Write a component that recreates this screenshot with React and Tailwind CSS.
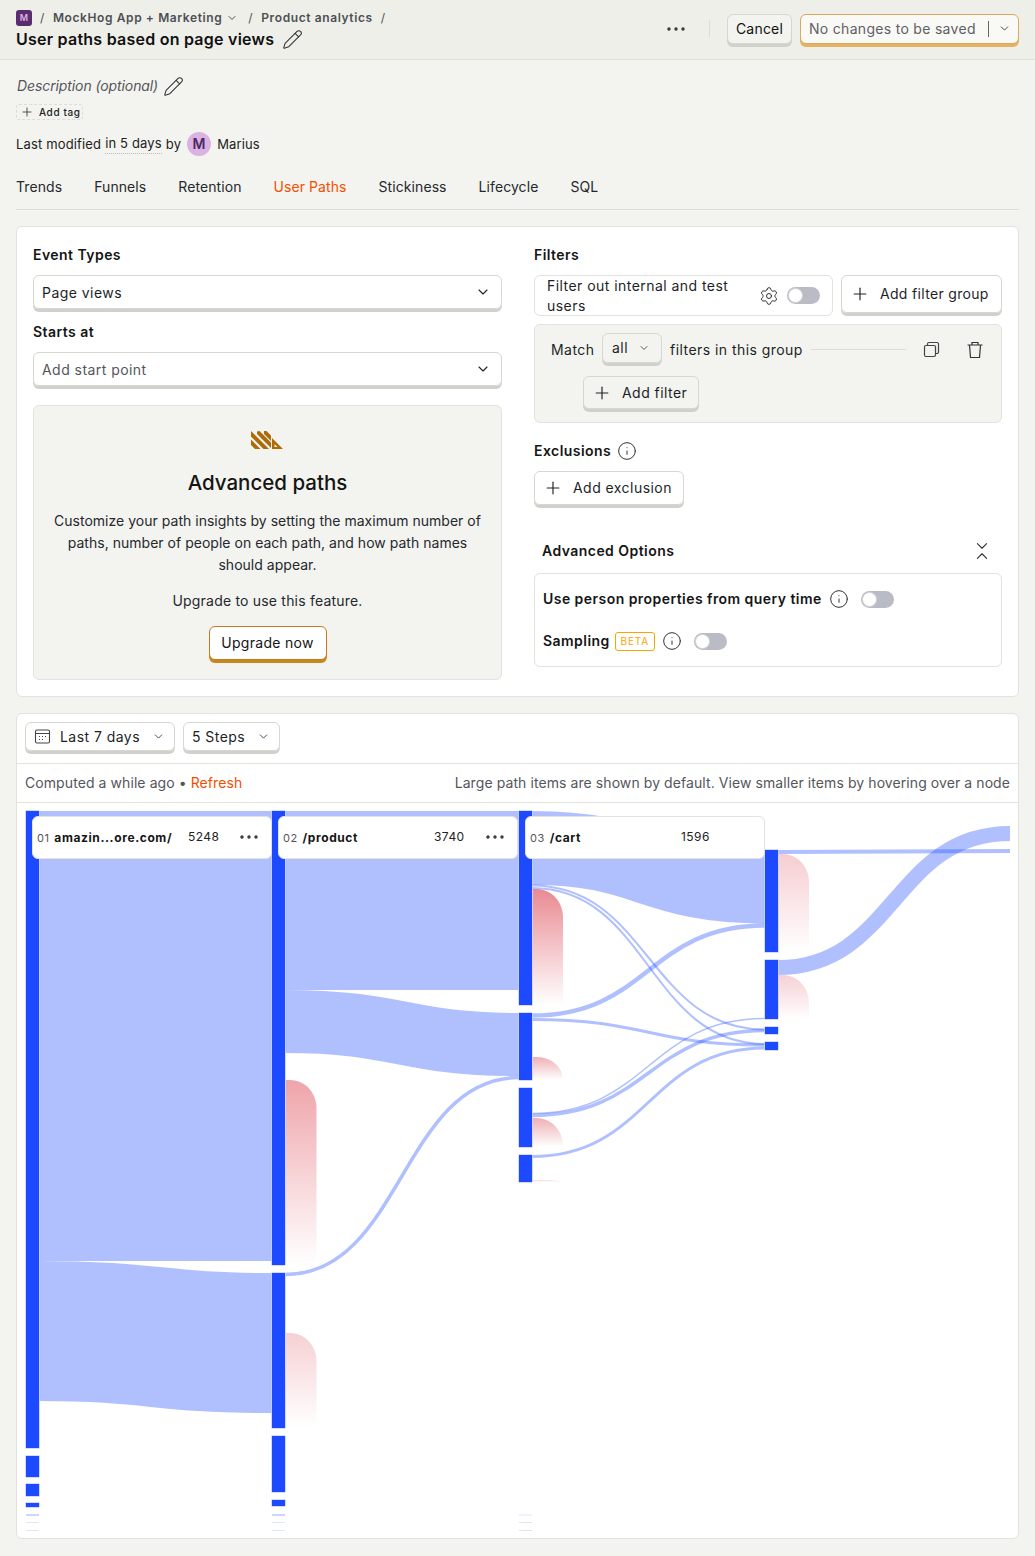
import { ChevronDown, ChevronsDownUp, Ellipsis, Info, Pencil, Plus, Settings } from "lucide-react";

const BLUE = "#1d4aff";

// x0, x1, y at source, y at target, band width
const links = [
  [39, 272, 1036, 1036, 450],
  [39, 272, 1331, 1343, 140],
  [285, 519, 900.5, 900.5, 179],
  [285, 519, 1021.5, 1044.5, 63],
  [285, 519, 1274.5, 1077.5, 3.5],
  [532, 765, 848, 886.5, 74],
  [532, 765, 885.5, 1029.5, 2],
  [532, 765, 888, 1044, 2],
  [532, 765, 1015.5, 925.5, 4.5],
  [532, 765, 1019.5, 1045, 3],
  [532, 765, 1113.5, 1018.5, 1.5],
  [532, 765, 1115.5, 1030.5, 3.5],
  [532, 765, 1156.5, 1048, 3],
  [778, 1010, 852, 851, 4],
  [778, 1010, 967.5, 833.5, 15],
];

const nodes = [
  [26, 811, 1448], [26, 1456, 1477], [26, 1484, 1496], [26, 1503, 1507],
  [272, 811, 1265], [272, 1273, 1428], [272, 1436, 1492], [272, 1500, 1506],
  [519, 811, 1005], [519, 1013, 1080], [519, 1088, 1147], [519, 1155, 1182],
  [765, 850, 952], [765, 960, 1019], [765, 1027, 1034], [765, 1042, 1050],
];

const faint = [
  [26, 1514.5, 0.45], [26, 1522, 0.14], [26, 1530, 0.14],
  [272, 1514.5, 0.45], [272, 1522, 0.14], [272, 1530, 0.14],
  [519, 1514.5, 0.14], [519, 1522, 0.14], [519, 1530, 0.14],
];

const dropoffs = [
  [286, 1080, 1265, "#eea4aa"],
  [286, 1333, 1428, "#f6d0d4"],
  [532.5, 889, 1005, "#e98a92"],
  [532.5, 1057, 1080, "#eeb0b5"],
  [532.5, 1118, 1147, "#eeb0b5"],
  [532.5, 1180, 1182, "#f9d5d8"],
  [778.5, 854, 952, "#f6cdd1"],
  [778.5, 975, 1019, "#f6d0d4"],
];

function linkPath([x0, x1, y0, y1]) {
  const m = (x0 + x1) / 2;
  return `M${x0} ${y0}C${m} ${y0} ${m} ${y1} ${x1} ${y1}`;
}

function dropPath([x, top, bottom]) {
  const r = Math.min(bottom - top, 28);
  return `M${x} ${top}H${x + 4}C${x + 20} ${top} ${x + 30.5} ${top + r * 0.5} ${x + 30.5} ${top + r}V${bottom}H${x}Z`;
}

function Raised({ className = "", children }) {
  return (
    <div className={`flex items-center rounded-md border border-[#d6d7d0] shadow-[0_3px_0_#d0d1cb] ${className}`}>
      {children}
    </div>
  );
}

function Toggle() {
  return (
    <div className="h-[17px] w-[33px] shrink-0 rounded-full bg-[#b9bcc4] p-px">
      <div className="h-[15px] w-[15px] rounded-full border border-[#d2d3d6] bg-white" />
    </div>
  );
}

function AddButton({ label, className = "" }) {
  return (
    <Raised className={`whitespace-nowrap pl-2 ${className}`}>
      <Plus size={20} strokeWidth={1.4} className="mr-[10px] shrink-0 text-[#222]" />
      <span>{label}</span>
    </Raised>
  );
}

function InfoIcon({ className = "" }) {
  return <Info size={20} strokeWidth={1.2} className={`shrink-0 text-[#333] ${className}`} />;
}

function NodeCard({ step, name, count, dots = true, left }) {
  return (
    <div className={`absolute top-[13px] flex h-[43px] w-[240px] items-center rounded-md border border-[#e2e3dd] bg-white pl-1 ${left}`}>
      <div className="mt-px flex w-[151px] items-baseline gap-[5px]">
        <span className="text-[11px] text-[#555]">{step}</span>
        <span className="text-xs font-bold tracking-[0.6px] text-[#151515]">{name}</span>
      </div>
      <span className="-mt-[2px] text-xs text-[#222]">{count}</span>
      {dots && <Ellipsis size={24} strokeWidth={1.4} className="absolute right-[10px] top-[8px] text-[#333]" />}
    </div>
  );
}

function PathsChart() {
  return (
    <div className="relative h-[735px]">
      <svg width="1001" height="735" viewBox="17 803 1001 735" className="block">
        <defs>
          {dropoffs.map((d, i) => (
            <linearGradient key={i} id={`drop-${i}`} x1="0" y1="0" x2="0" y2="1">
              <stop offset="0" stopColor={d[3]} />
              <stop offset="1" stopColor={d[3]} stopOpacity="0" />
            </linearGradient>
          ))}
        </defs>
        {dropoffs.map((d, i) => (
          <path key={i} d={dropPath(d)} fill={`url(#drop-${i})`} />
        ))}
        {links.map((l, i) => (
          <path key={i} d={linkPath(l)} fill="none" stroke={BLUE} strokeOpacity="0.35" strokeWidth={l[4]} />
        ))}
        {nodes.map(([x, a, b], i) => (
          <rect key={i} x={x - 0.5} y={a - 0.5} width="14" height={b - a + 1} fill={BLUE} stroke="#fff" strokeOpacity="0.6" />
        ))}
        {faint.map(([x, y, o], i) => (
          <rect key={i} x={x} y={y} width="13" height="1" fill={BLUE} fillOpacity={o} />
        ))}
      </svg>
      <NodeCard step="01" name="amazin...ore.com/" count="5248" left="left-[15px]" />
      <NodeCard step="02" name="/product" count="3740" left="left-[261px]" />
      <NodeCard step="03" name="/cart" count="1596" dots={false} left="left-[508px]" />
    </div>
  );
}

export default function App() {
  return (
    <div className="min-h-screen bg-[#f3f4ef] font-['Inter',sans-serif] text-sm tracking-[0.45px] text-[#1d1f27]">
      <header className="flex h-[60px] items-center justify-between border-b border-[#dfe0da] bg-[#eeefe9] pl-4 pr-4">
        <div>
          <div className="mt-px flex h-4 items-center text-xs font-semibold tracking-[0.6px] text-[#4d4f54]">
            <div className="flex h-4 w-4 items-center justify-center rounded-[3px] bg-[#5a2d6e] text-[9px] font-semibold tracking-normal text-[#dcb1e3]">M</div>
            <span className="mx-[8px] font-normal">/</span>
            <span>MockHog App + Marketing</span>
            <ChevronDown size={12} className="ml-[4px]" />
            <span className="ml-[10px] mr-[8px] font-normal">/</span>
            <span>Product analytics</span>
            <span className="ml-[8px] font-normal">/</span>
          </div>
          <div className="mt-[2px] flex h-[22px] items-center text-base font-semibold tracking-[0.24px] text-[#111]">
            User paths based on page views
            <Pencil size={21} strokeWidth={1.2} className="ml-[8px] text-[#333]" />
          </div>
        </div>
        <div className="-mt-[2px] flex items-center">
          <Ellipsis size={24} strokeWidth={1.4} className="mr-[21px] text-[#333]" />
          <div className="mr-[17px] h-[17px] w-px bg-[#dcddd7]" />
          <div className="mr-[8px] flex h-[30px] w-[65px] items-center justify-center rounded-md border border-[#d6d7d0] bg-[#f3f4ef] tracking-[0.2px] text-[#111] shadow-[0_3px_0_#d0d1cb]">Cancel</div>
          <div className="flex h-[30px] w-[219px] items-center rounded-md border border-[#d8a95f] bg-[#f9f9f6] pl-2 tracking-[0.3px] text-[#5f6065] shadow-[0_3px_0_#e5b263]">
            <span>No changes to be saved</span>
            <div className="ml-[12px] h-[16px] w-px bg-[#666]" />
            <ChevronDown size={13} strokeWidth={1.6} className="ml-[9px] text-[#333]" />
          </div>
        </div>
      </header>

      <div className="px-4">
        <div className="mt-[17px] flex h-[18px] items-center pl-px italic tracking-[-0.1px] text-[#55565b]">
          Description (optional)
          <Pencil size={21} strokeWidth={1.2} className="ml-[5px] text-[#333]" />
        </div>
        <div className="mt-[9px] flex h-4 w-[67px] items-center rounded-[3px] border border-dashed border-[#dcddd7] pl-[3px] text-[10px] font-medium tracking-[0.6px] text-[#222]">
          <Plus size={14} strokeWidth={1.3} className="mr-[5px]" />
          Add tag
        </div>
        <div className="mt-[12px] flex h-6 items-center text-[13px] tracking-[0.15px] text-[#222]">
          Last modified
          <span className="ml-[4px] border-b border-dotted border-[#bbb]">in 5 days</span>
          <span className="ml-[4px]">by</span>
          <div className="ml-[6px] flex h-6 w-6 items-center justify-center rounded-full bg-[#dcb1e3] text-sm font-semibold text-[#4a2a63]">M</div>
          <span className="ml-[6px]">Marius</span>
        </div>
        <nav className="mt-[19px] flex h-[35px] items-start gap-8 border-b border-[#dcddd7] pt-[2px] tracking-[0.08px] text-[#26282e]">
          <span>Trends</span>
          <span>Funnels</span>
          <span>Retention</span>
          <span className="text-[#f54e00]">User Paths</span>
          <span>Stickiness</span>
          <span>Lifecycle</span>
          <span>SQL</span>
        </nav>

        <section className="mt-4 flex h-[471px] gap-8 rounded-md border border-[#e2e3dd] bg-white px-4 pt-[19px]">
          <div className="w-[469px]">
            <h3 className="h-[18px] font-semibold leading-[18px] text-[#151515]">Event Types</h3>
            <Raised className="mt-[11px] h-[34px] justify-between pl-2 pr-[10px]">
              <span className="mt-px">Page views</span>
              <ChevronDown size={16} strokeWidth={1.6} className="text-[#222]" />
            </Raised>
            <h3 className="mt-[14px] h-[18px] font-semibold leading-[18px] text-[#151515]">Starts at</h3>
            <Raised className="mt-[11px] h-[34px] justify-between pl-2 pr-[10px] text-[#55565b]">
              <span className="mt-px">Add start point</span>
              <ChevronDown size={16} strokeWidth={1.6} className="text-[#222]" />
            </Raised>
            <div className="mt-[19px] flex h-[275px] flex-col items-center rounded-md border border-[#e2e3dd] bg-[#f3f4ef] pt-[25px] text-center tracking-[0.02px]">
              <svg width="33" height="19" viewBox="252 431 33 19" className="block" fill="#ad6a08">
                <polygon points="252,431 270,449 264.5,449 252,436.5" />
                <polygon points="252,439.5 261.5,449 256,449 252,445" />
                <polygon points="258,431.5 260.5,431 272,442.5 272,448 258,434" />
                <polygon points="265,431 267.5,431 272,435.5 272,441 265,434" />
                <path d="M273 438L284 449H273ZM275.5 444V447H278.5Z" fillRule="evenodd" />
              </svg>
              <h2 className="mt-[19px] text-[20.5px] font-[450] leading-[28px] tracking-normal text-[#151515]">Advanced paths</h2>
              <p className="mt-[13px] w-[440px] leading-[22px] text-[#26282e]">
                Customize your path insights by setting the maximum number of paths, number of people on each path, and how path names should appear.
              </p>
              <p className="mt-[14px] leading-[22px] tracking-[0.2px] text-[#26282e]">Upgrade to use this feature.</p>
              <div className="mt-[14px] flex h-[34px] w-[118px] items-center justify-center rounded-md border border-[#c17d1c] bg-white tracking-[0.3px] text-[#151515] shadow-[0_3px_0_#c9851f]">
                Upgrade now
              </div>
            </div>
          </div>

          <div className="w-[468px]">
            <h3 className="h-[18px] font-semibold leading-[18px] text-[#151515]">Filters</h3>
            <div className="mt-[11px] flex gap-2">
              <div className="flex h-[41px] w-[299px] items-center rounded-md border border-[#e2e3dd] pl-3 pr-3">
                <span className="w-[205px] leading-[20px]">Filter out internal and test users</span>
                <Settings size={20} strokeWidth={1.2} className="ml-auto mr-[8px] text-[#333]" />
                <Toggle />
              </div>
              <AddButton label="Add filter group" className="h-[38px] w-[161px] tracking-[0.32px]" />
            </div>
            <div className="mt-[8px] h-[99px] rounded-md border border-[#e2e3dd] bg-[#f3f4ef] pl-4 pt-2">
              <div className="flex h-[30px] items-center">
                <span className="mt-[3px] w-[44px]">Match</span>
                <Raised className="ml-[7px] h-[30px] w-[60px] justify-between pl-[9px] pr-[11px]">
                  <span>all</span>
                  <ChevronDown size={12} strokeWidth={1.6} className="text-[#333]" />
                </Raised>
                <span className="ml-2 mt-[3px] whitespace-nowrap">filters in this group</span>
                <div className="ml-2 mt-[3px] h-px w-[95px] bg-[#dcddd7]" />
                <svg width="17" height="17" viewBox="0 0 17 17" fill="none" stroke="#444" strokeWidth="1.2" className="ml-[17px] mt-[3px]">
                  <rect x="1.5" y="4.5" width="11" height="11" rx="1.5" />
                  <path d="M4.5 4.5V3a1.5 1.5 0 0 1 1.5-1.5h8A1.5 1.5 0 0 1 15.5 3v8a1.5 1.5 0 0 1-1.5 1.5h-1.5" />
                </svg>
                <svg width="18" height="18" viewBox="0 0 18 18" fill="none" stroke="#333" strokeWidth="1.2" className="ml-[26px] mt-[3px]">
                  <path d="M1.5 4H16.5M6 4V1.5H12V4M3.5 4L4.5 16.5H13.5L14.5 4" />
                </svg>
              </div>
              <AddButton label="Add filter" className="ml-[32px] mt-[13px] h-[33px] w-[116px] bg-[#f3f4ef]" />
            </div>
            <div className="mt-[19px] flex h-[18px] items-center font-semibold text-[#151515]">
              Exclusions
              <InfoIcon className="ml-[6px]" />
            </div>
            <AddButton label="Add exclusion" className="mt-[11px] h-[34px] w-[150px]" />
            <div className="mt-[37px] flex h-[18px] items-center justify-between pl-2 pr-[9px] font-semibold text-[#151515]">
              <span>Advanced Options</span>
              <ChevronsDownUp size={22} strokeWidth={1.2} className="text-[#333]" />
            </div>
            <div className="mt-[13px] h-[94px] rounded-md border border-[#e2e3dd] pl-2 pt-4">
              <div className="flex h-[18px] items-center font-semibold text-[#151515]">
                Use person properties from query time
                <InfoIcon className="ml-[7px]" />
                <div className="ml-[12px]"><Toggle /></div>
              </div>
              <div className="mt-6 flex h-[18px] items-center font-semibold text-[#151515]">
                Sampling
                <span className="ml-[5px] flex h-[19px] w-10 items-center justify-center rounded-[3px] border border-[#f7a501] text-[10px] font-normal tracking-[0.8px] text-[#f7a501]">BETA</span>
                <InfoIcon className="ml-[7px]" />
                <div className="ml-[12px]"><Toggle /></div>
              </div>
            </div>
          </div>
        </section>

        <section className="mt-4 overflow-hidden rounded-md border border-[#e2e3dd] bg-white">
          <div className="flex h-[50px] items-start gap-2 border-b border-[#e2e3dd] pl-2 pt-2">
            <Raised className="h-[29px] w-[150px] pl-[8px]">
              <svg width="17" height="17" viewBox="0 0 17 17" fill="none" stroke="#444" strokeWidth="1.1">
                <rect x="1.5" y="2" width="14" height="13" rx="1.5" />
                <path d="M1.5 5.5H15.5" />
                <path d="M5 8.5H6M8 8.5H9M11 8.5H12M5 11.5H6M8 11.5H9" strokeWidth="1" />
              </svg>
              <span className="ml-[9px]">Last 7 days</span>
              <ChevronDown size={13} strokeWidth={1.6} className="ml-[12px] text-[#333]" />
            </Raised>
            <Raised className="h-[29px] w-[97px] pl-2">
              <span>5 Steps</span>
              <ChevronDown size={13} strokeWidth={1.6} className="ml-[12px] text-[#333]" />
            </Raised>
          </div>
          <div className="flex h-[39px] items-center justify-between border-b border-[#e2e3dd] px-2 tracking-[0.08px] text-[#55565b]">
            <span>
              Computed a while ago • <span className="text-[#f54e00]">Refresh</span>
            </span>
            <span>Large path items are shown by default. View smaller items by hovering over a node</span>
          </div>
          <PathsChart />
        </section>
      </div>
    </div>
  );
}
